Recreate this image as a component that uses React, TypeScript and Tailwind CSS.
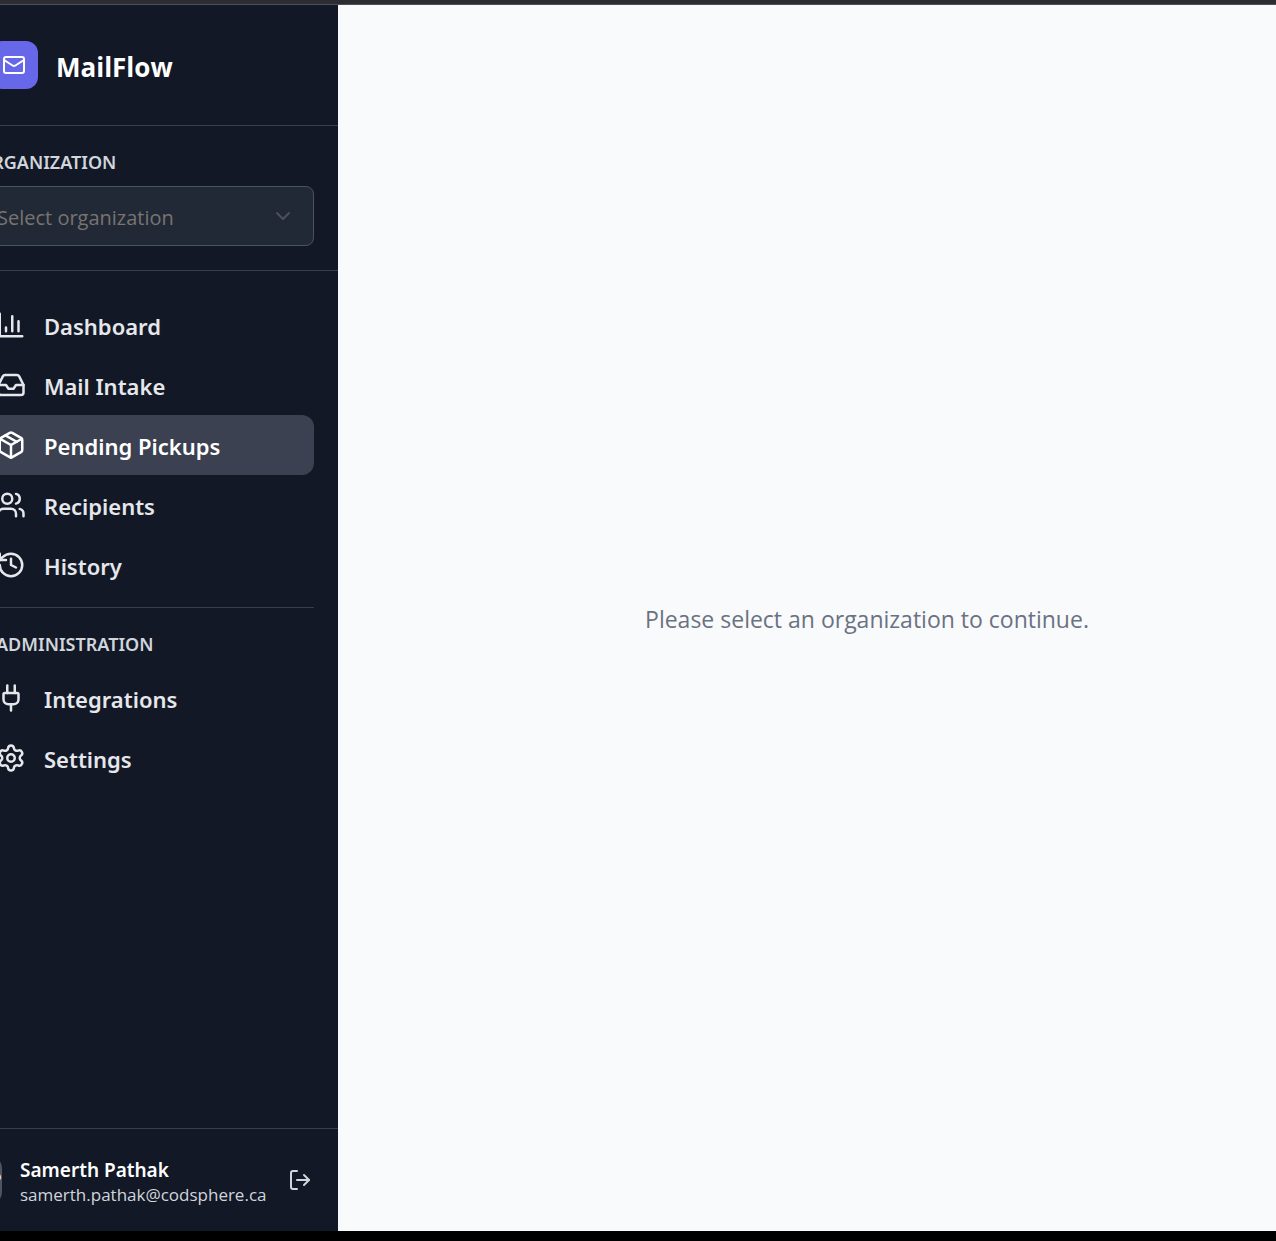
import React from "react";
import {
  ChevronDown,
  History,
  Inbox,
  LogOut,
  Mail,
  Package,
  Plug,
  Settings,
  Users,
} from "lucide-react";

type IconType = React.ComponentType<{ size?: number; strokeWidth?: number; className?: string }>;

function DashboardIcon() {
  return (
    <svg width="30" height="30" viewBox="0 0 24 24" fill="none" stroke="currentColor" strokeWidth="2" strokeLinecap="round" strokeLinejoin="round" className="shrink-0" aria-hidden="true">
      <path d="M3 3v18h18M8 17v-3M13 17V5M18 17V9" />
    </svg>
  );
}

function NavItem({ icon: Icon, label, active = false }: { icon: IconType; label: string; active?: boolean }) {
  return (
    <a
      href="#"
      aria-current={active ? "page" : undefined}
      className={
        active
          ? "flex h-[60px] items-center gap-[18px] rounded-xl bg-[#3b4150] px-[18px] text-white"
          : "flex h-[60px] items-center gap-[18px] rounded-xl px-[18px] text-gray-200"
      }
    >
      <Icon size={30} strokeWidth={2} className="shrink-0" />
      <span className="pt-[2px] text-[22px] font-semibold">{label}</span>
    </a>
  );
}

export default function App() {
  return (
    <div className="flex h-screen flex-col overflow-hidden bg-black pb-[10px] font-['Noto_Sans','Open_Sans',sans-serif]">
      <div className="h-[5px] shrink-0 border-b border-[#4b5060] bg-[#2c2d31]" />
      <div className="flex min-h-0 flex-1">
        <aside className="-ml-[46px] flex w-[384px] shrink-0 flex-col bg-[#121826] text-gray-200">
          <div className="flex items-center gap-[18px] border-b border-[#373e4d] p-9">
            <div className="flex size-12 items-center justify-center rounded-xl bg-[#6767ea] text-white">
              <Mail size={24} strokeWidth={2} />
            </div>
            <span className="pt-1 font-['Open_Sans',sans-serif] text-[26px] font-bold text-white">MailFlow</span>
          </div>

          <div className="border-b border-[#373e4d] p-6">
            <label htmlFor="organization" className="mb-3 block text-[18px] leading-6 font-semibold text-gray-300">
              ORGANIZATION
            </label>
            <div className="relative">
              <select
                id="organization"
                defaultValue=""
                className="h-[60px] w-full appearance-none rounded-lg border border-[#4b5261] bg-[#222936] px-[18px] pt-1 font-['Open_Sans',sans-serif] text-[20px] text-[#777471]"
              >
                <option value="">Select organization</option>
              </select>
              <ChevronDown size={24} className="pointer-events-none absolute top-[18px] right-[19px] text-[#4c515c]" />
            </div>
          </div>

          <nav className="flex-1 p-6">
            <NavItem icon={DashboardIcon} label="Dashboard" />
            <NavItem icon={Inbox} label="Mail Intake" />
            <NavItem icon={Package} label="Pending Pickups" active />
            <NavItem icon={Users} label="Recipients" />
            <NavItem icon={History} label="History" />
            <div className="mt-3 border-t border-[#373e4d] pt-6">
              <h2 className="mb-3 px-[18px] text-[18px] leading-6 font-semibold text-gray-300">ADMINISTRATION</h2>
              <NavItem icon={Plug} label="Integrations" />
              <NavItem icon={Settings} label="Settings" />
            </div>
          </nav>

          <div className="flex items-center gap-[18px] border-t border-[#373e4d] p-6">
            <div className="flex h-12 w-6 shrink-0 items-center justify-center rounded-full bg-[#4b5563] text-[20px] font-semibold text-white">
              SP
            </div>
            <div className="min-w-0 flex-1 pt-1">
              <p className="text-[19px] leading-[26px] font-semibold text-white">Samerth Pathak</p>
              <p className="font-['Open_Sans',sans-serif] text-[17px] leading-6 text-gray-300">samerth.pathak@codsphere.ca</p>
            </div>
            <button type="button" aria-label="Sign out" className="mr-0.5 text-gray-300">
              <LogOut size={24} strokeWidth={2} />
            </button>
          </div>
        </aside>

        <main className="flex flex-1 items-center justify-center bg-[#f9fafc] pl-[120px]">
          <p className="pt-[2px] font-['Open_Sans',sans-serif] text-[23px] text-gray-500">
            Please select an organization to continue.
          </p>
        </main>
      </div>
    </div>
  );
}
